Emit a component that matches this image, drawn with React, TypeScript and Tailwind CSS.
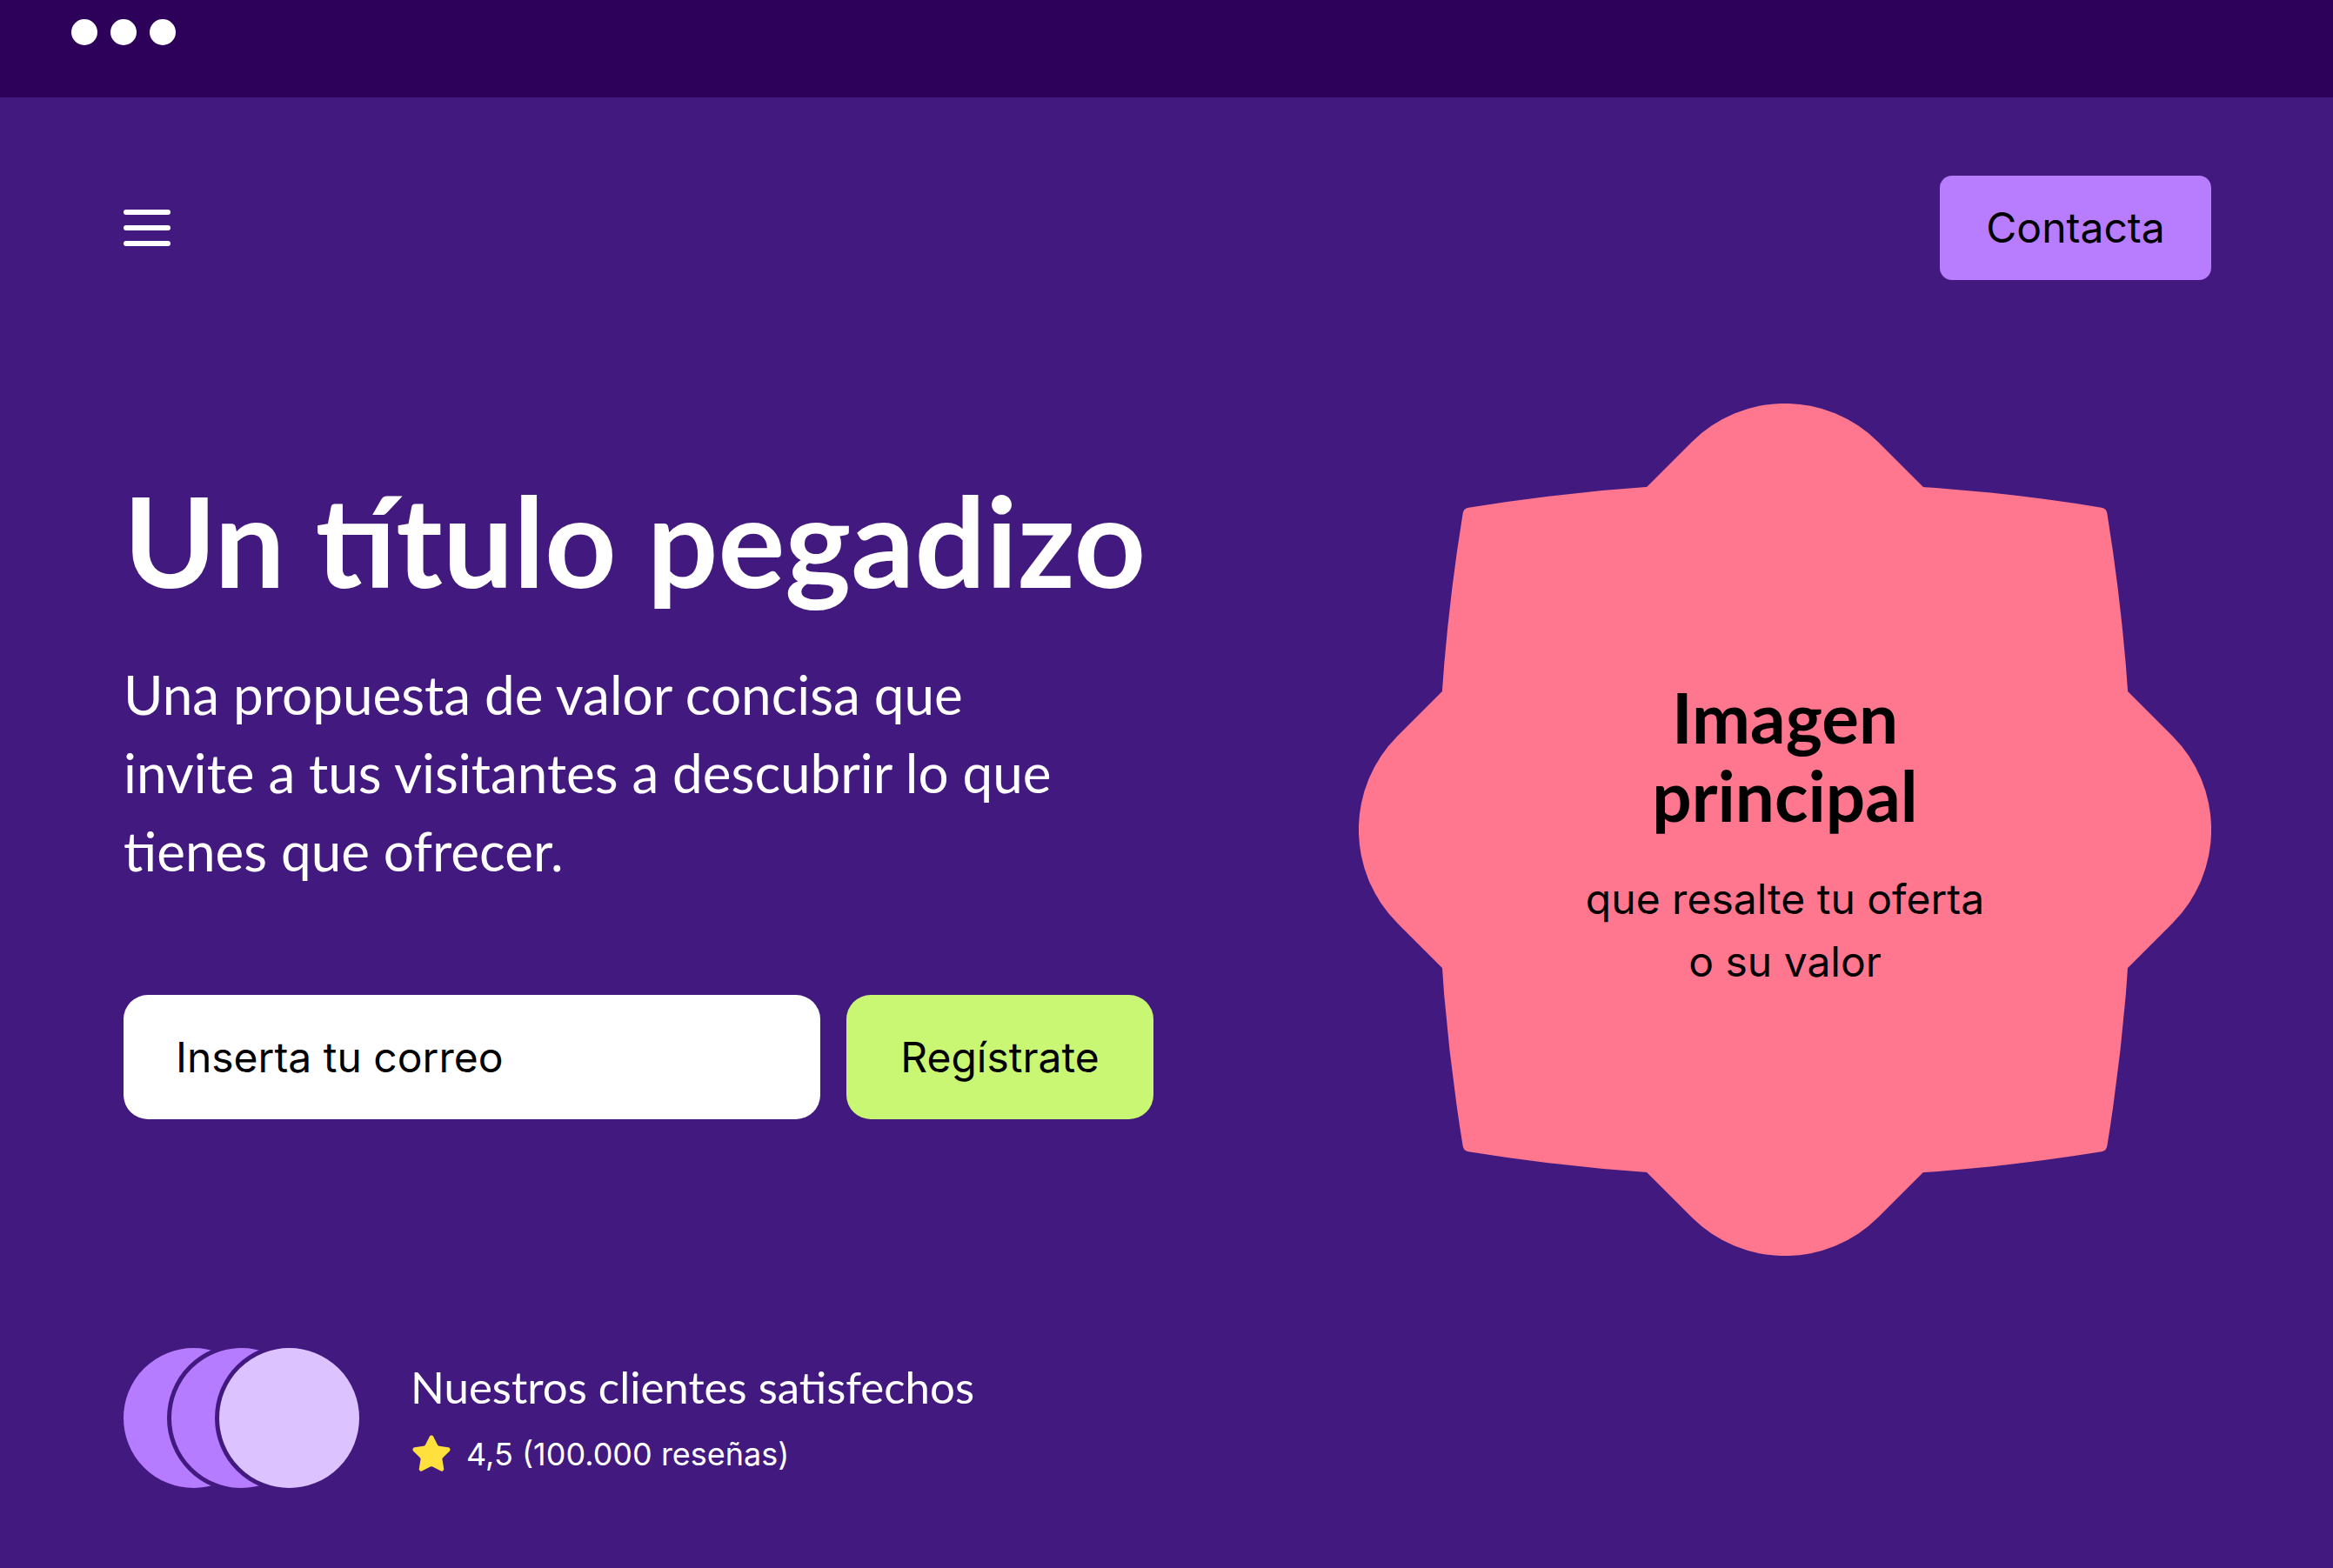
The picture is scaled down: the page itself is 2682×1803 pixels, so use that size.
import { Star } from 'lucide-react';

const PINK = '#ff778f';

function Flower() {
  return (
    <div className="relative mt-[142px] size-[980px] shrink-0">
      <svg viewBox="0 0 1000 1000" className="absolute inset-0 size-full" aria-hidden>
        <path
          d="M130 130 Q500 70 870 130 Q930 500 870 870 Q500 930 130 870 Q70 500 130 130 Z"
          fill={PINK}
          stroke={PINK}
          strokeWidth={16}
          strokeLinejoin="round"
        />
        <rect x={101} y={101} width={798} height={798} rx={155} fill={PINK} transform="rotate(45 500 500)" />
      </svg>
      <div className="relative flex size-full flex-col items-center justify-center pt-[12px] text-center text-black">
        <h2 className="font-['Lato',sans-serif] text-[80px] font-bold leading-[90px]">
          Imagen
          <br />
          principal
        </h2>
        <p className="mt-[39px] font-['Inter',sans-serif] text-[48px] leading-[72px]">
          que resalte tu oferta
          <br />
          o su valor
        </p>
      </div>
    </div>
  );
}

function Avatars() {
  return (
    <div className="-ml-[5px] flex">
      <span className="size-[171px] rounded-full border-[5px] border-[#421a7f] bg-[#b67cff]" />
      <span className="-ml-[116px] size-[171px] rounded-full border-[5px] border-[#421a7f] bg-[#b67cff]" />
      <span className="-ml-[116px] size-[171px] rounded-full border-[5px] border-[#421a7f] bg-[#dcc2ff]" />
    </div>
  );
}

export default function App() {
  return (
    <div className="min-h-screen bg-[#421a7f] text-white">
      <div className="flex h-[112px] gap-[15px] bg-[#2d005a] pl-[82px] pt-[22px]">
        <span className="size-[30px] rounded-full bg-white" />
        <span className="size-[30px] rounded-full bg-white" />
        <span className="size-[30px] rounded-full bg-white" />
      </div>

      <div className="pl-[142px] pr-[140px]">
        <nav className="mt-[90px] flex h-[120px] items-center justify-between">
          <svg width={54} height={42} viewBox="0 0 54 42" aria-label="Menú">
            <g stroke="white" strokeWidth={6} strokeLinecap="round">
              <line x1={3} y1={3} x2={51} y2={3} />
              <line x1={3} y1={21} x2={51} y2={21} />
              <line x1={3} y1={39} x2={51} y2={39} />
            </g>
          </svg>
          <button className="h-[120px] w-[312px] rounded-[14px] bg-[#b77dfe] font-['Inter',sans-serif] text-[48px] text-black">
            Contacta
          </button>
        </nav>

        <div className="flex items-start justify-between">
          <div className="pt-[227px]">
            <h1 className="font-['Lato',sans-serif] text-[144px] font-bold leading-none">Un título pegadizo</h1>
            <p className="mt-[60px] font-['Lato',sans-serif] text-[62px] leading-[90px]">
              Una propuesta de valor concisa que
              <br />
              invite a tus visitantes a descubrir lo que
              <br />
              tienes que ofrecer.
            </p>

            <form className="mt-[121px] flex gap-[30px]" onSubmit={(e) => e.preventDefault()}>
              <input
                type="email"
                placeholder="Inserta tu correo"
                className="h-[143px] w-[801px] rounded-[28px] bg-white pl-[60px] font-['Inter',sans-serif] text-[48px] text-black outline-none placeholder:text-black"
              />
              <button className="h-[143px] w-[353px] rounded-[28px] bg-[#c9f774] font-['Inter',sans-serif] text-[48px] text-black">
                Regístrate
              </button>
            </form>

            <div className="mt-[258px] flex items-center">
              <Avatars />
              <div className="ml-[54px]">
                <p className="font-['Lato',sans-serif] text-[51px] leading-[60px]">Nuestros clientes satisfechos</p>
                <div className="mt-[23px] flex items-center gap-[16px]">
                  <Star size={48} fill="#ffe03d" color="#ffe03d" strokeWidth={1.5} />
                  <span className="font-['Inter',sans-serif] text-[36px] leading-[48px]">4,5 (100.000 reseñas)</span>
                </div>
              </div>
            </div>
          </div>

          <Flower />
        </div>
      </div>
    </div>
  );
}
